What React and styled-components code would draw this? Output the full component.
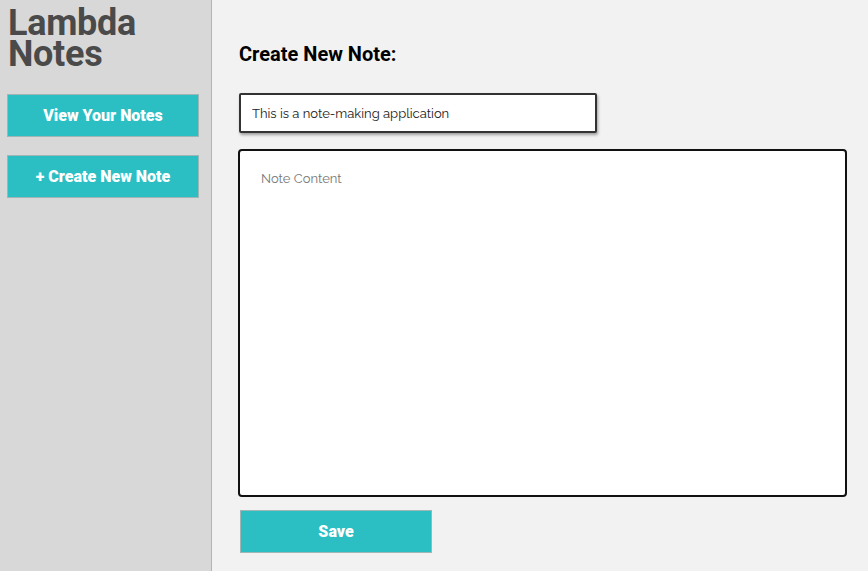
import React from "react";
import styled, { createGlobalStyle } from "styled-components";

const Global = createGlobalStyle`
  html, body { margin: 0; padding: 0; height: 100%; }
  body { background: #f2f2f2; font-family: Roboto, "Liberation Sans", sans-serif; }
  #root { height: 100%; }
`;

const Layout = styled.div`
  display: flex;
  height: 571px;
`;

const Sidebar = styled.aside`
  width: 212px;
  flex-shrink: 0;
  background: #d8d8d8;
  border-right: 1px solid #b4b4b4;
  padding: 8px 13px 0 7px;
  box-sizing: border-box;
  display: flex;
  flex-direction: column;
`;

const Title = styled.h1`
  margin: 0 0 24px 1px;
  font-size: 36px;
  font-weight: 700;
  line-height: 31px;
  color: #4a4a4a;
  letter-spacing: -0.3px;
`;

const NavButton = styled.button`
  height: 43px;
  width: 192px;
  margin-bottom: 18px;
  background: #2bbfc4;
  border: 1px solid #9fb5b6;
  color: #fff;
  font-family: Roboto, "Liberation Sans", sans-serif;
  font-weight: 900;
  font-size: 16px;
  cursor: pointer;
`;

const Main = styled.main`
  flex: 1;
  padding: 42px 20px 0 26px;
  display: flex;
  flex-direction: column;
`;

const Heading = styled.h2`
  margin: 0 0 27px 1px;
  font-size: 20px;
  font-weight: 700;
  color: #000;
`;

const TitleInput = styled.input`
  width: 358px;
  height: 40px;
  box-sizing: border-box;
  margin-left: 1px;
  border: 2px solid #333;
  border-radius: 2px;
  box-shadow: 1px 2px 3px rgba(0,0,0,0.35);
  padding: 0 11px;
  font-family: Raleway, Lato, "Open Sans", sans-serif;
  font-size: 13px;
  color: #222;
  background: #fff;
  margin-bottom: 16px;
`;

const ContentArea = styled.textarea`
  width: 609px;
  height: 348px;
  box-sizing: border-box;
  border: 2px solid #111;
  border-radius: 4px;
  padding: 20px 21px;
  font-family: Raleway, Lato, "Open Sans", sans-serif;
  font-size: 13px;
  resize: none;
  background: #fff;
  margin-bottom: 13px;
  &::placeholder { color: #777; }
`;

const SaveButton = styled(NavButton)`
  margin-left: 2px;
  height: 43px;
`;

export default function App() {
  return (
    <>
      <Global />
      <Layout>
        <Sidebar>
          <Title>Lambda<br />Notes</Title>
          <NavButton>View Your Notes</NavButton>
          <NavButton>+ Create New Note</NavButton>
        </Sidebar>
        <Main>
          <Heading>Create New Note:</Heading>
          <TitleInput defaultValue="This is a note-making application" />
          <ContentArea placeholder="Note Content" />
          <SaveButton>Save</SaveButton>
        </Main>
      </Layout>
    </>
  );
}
